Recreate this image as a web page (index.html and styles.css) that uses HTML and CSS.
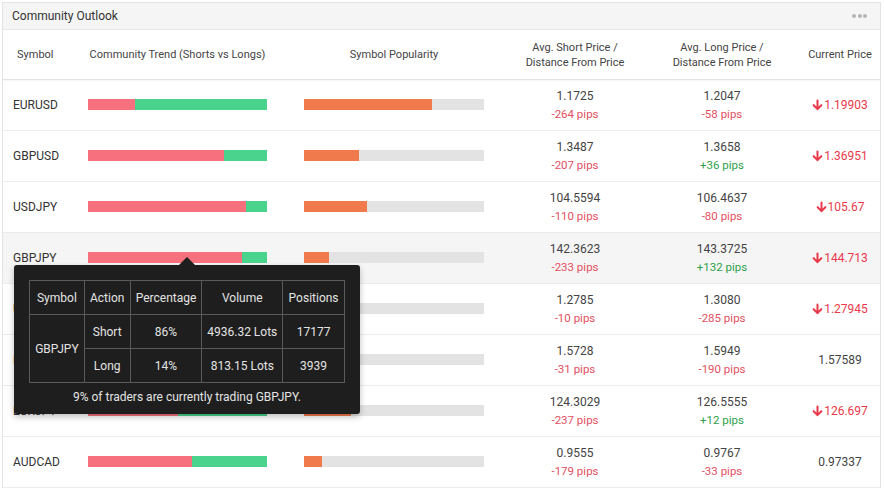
FILE: index.html
```html
<!DOCTYPE html>
<html>
<head>
<meta charset="utf-8">
<link rel="stylesheet" href="styles.css">
</head>
<body>
<div class="panel">
  <div class="panel-head">
    <span class="panel-title">Community Outlook</span>
    <span class="dots"><i></i><i></i><i></i></span>
  </div>
  <div class="table">
    <div class="row head">
      <div class="c-sym">Symbol</div>
      <div class="c-mid">Community Trend (Shorts vs Longs)</div>
      <div class="c-mid">Symbol Popularity</div>
      <div class="c-mid">Avg. Short Price /<br>Distance From Price</div>
      <div class="c-mid">Avg. Long Price /<br>Distance From Price</div>
      <div class="c-mid">Current Price</div>
    </div>

    <div class="row">
      <div class="c-sym sym">EURUSD</div>
      <div class="c-mid"><div class="trend"><span class="short" style="width:26%"></span><span class="long"></span></div></div>
      <div class="c-mid"><div class="pop"><span style="width:71%"></span></div></div>
      <div class="c-mid price"><div>1.1725</div><div class="neg">-264 pips</div></div>
      <div class="c-mid price"><div>1.2047</div><div class="neg">-58 pips</div></div>
      <div class="c-mid cur down"><svg class="arr" viewBox="0 0 12 12"><path d="M6 1v9.5M1.8 6.2 6 10.5l4.2-4.3"/></svg>1.19903</div>
    </div>

    <div class="row">
      <div class="c-sym sym">GBPUSD</div>
      <div class="c-mid"><div class="trend"><span class="short" style="width:76%"></span><span class="long"></span></div></div>
      <div class="c-mid"><div class="pop"><span style="width:30.5%"></span></div></div>
      <div class="c-mid price"><div>1.3487</div><div class="neg">-207 pips</div></div>
      <div class="c-mid price"><div>1.3658</div><div class="pos">+36 pips</div></div>
      <div class="c-mid cur down"><svg class="arr" viewBox="0 0 12 12"><path d="M6 1v9.5M1.8 6.2 6 10.5l4.2-4.3"/></svg>1.36951</div>
    </div>

    <div class="row">
      <div class="c-sym sym">USDJPY</div>
      <div class="c-mid"><div class="trend"><span class="short" style="width:88%"></span><span class="long"></span></div></div>
      <div class="c-mid"><div class="pop"><span style="width:35%"></span></div></div>
      <div class="c-mid price"><div>104.5594</div><div class="neg">-110 pips</div></div>
      <div class="c-mid price"><div>106.4637</div><div class="neg">-80 pips</div></div>
      <div class="c-mid cur down"><svg class="arr" viewBox="0 0 12 12"><path d="M6 1v9.5M1.8 6.2 6 10.5l4.2-4.3"/></svg>105.67</div>
    </div>

    <div class="row hover">
      <div class="c-sym sym">GBPJPY</div>
      <div class="c-mid"><div class="trend"><span class="short" style="width:86%"></span><span class="long"></span></div></div>
      <div class="c-mid"><div class="pop"><span style="width:14%"></span></div></div>
      <div class="c-mid price"><div>142.3623</div><div class="neg">-233 pips</div></div>
      <div class="c-mid price"><div>143.3725</div><div class="pos">+132 pips</div></div>
      <div class="c-mid cur down"><svg class="arr" viewBox="0 0 12 12"><path d="M6 1v9.5M1.8 6.2 6 10.5l4.2-4.3"/></svg>144.713</div>
    </div>

    <div class="row">
      <div class="c-sym sym">USDCAD</div>
      <div class="c-mid"><div class="trend"><span class="short" style="width:62%"></span><span class="long"></span></div></div>
      <div class="c-mid"><div class="pop"><span style="width:20%"></span></div></div>
      <div class="c-mid price"><div>1.2785</div><div class="neg">-10 pips</div></div>
      <div class="c-mid price"><div>1.3080</div><div class="neg">-285 pips</div></div>
      <div class="c-mid cur down"><svg class="arr" viewBox="0 0 12 12"><path d="M6 1v9.5M1.8 6.2 6 10.5l4.2-4.3"/></svg>1.27945</div>
    </div>

    <div class="row">
      <div class="c-sym sym">EURAUD</div>
      <div class="c-mid"><div class="trend"><span class="short" style="width:48%"></span><span class="long"></span></div></div>
      <div class="c-mid"><div class="pop"><span style="width:15%"></span></div></div>
      <div class="c-mid price"><div>1.5728</div><div class="neg">-31 pips</div></div>
      <div class="c-mid price"><div>1.5949</div><div class="neg">-190 pips</div></div>
      <div class="c-mid cur">1.57589</div>
    </div>

    <div class="row">
      <div class="c-sym sym">EURJPY</div>
      <div class="c-mid"><div class="trend"><span class="short" style="width:50%"></span><span class="long"></span></div></div>
      <div class="c-mid"><div class="pop"><span style="width:26%"></span></div></div>
      <div class="c-mid price"><div>124.3029</div><div class="neg">-237 pips</div></div>
      <div class="c-mid price"><div>126.5555</div><div class="pos">+12 pips</div></div>
      <div class="c-mid cur down"><svg class="arr" viewBox="0 0 12 12"><path d="M6 1v9.5M1.8 6.2 6 10.5l4.2-4.3"/></svg>126.697</div>
    </div>

    <div class="row">
      <div class="c-sym sym">AUDCAD</div>
      <div class="c-mid"><div class="trend"><span class="short" style="width:58%"></span><span class="long"></span></div></div>
      <div class="c-mid"><div class="pop"><span style="width:10%"></span></div></div>
      <div class="c-mid price"><div>0.9555</div><div class="neg">-179 pips</div></div>
      <div class="c-mid price"><div>0.9767</div><div class="neg">-33 pips</div></div>
      <div class="c-mid cur">0.97337</div>
    </div>

    <div class="tooltip">
      <table class="tt-table">
        <tr><th>Symbol</th><th>Action</th><th>Percentage</th><th>Volume</th><th>Positions</th></tr>
        <tr><td rowspan="2">GBPJPY</td><td>Short</td><td>86%</td><td>4936.32 Lots</td><td>17177</td></tr>
        <tr><td>Long</td><td>14%</td><td>813.15 Lots</td><td>3939</td></tr>
      </table>
      <div class="tt-foot">9% of traders are currently trading GBPJPY.</div>
    </div>
  </div>
</div>
</body>
</html>
```

FILE: styles.css
```css
* { box-sizing: border-box; }
html, body {
  margin: 0;
  padding: 0;
  background: #ffffff;
}
body {
  font-family: Roboto, "Liberation Sans", Arial, sans-serif;
  font-size: 12px;
  color: #333;
}
.panel {
  margin: 2px 3px 0 2px;
  border: 1px solid #e4e4e4;
  border-bottom: none;
}
.panel-head {
  height: 27px;
  background: #f5f5f5;
  border-bottom: 1px solid #e6e6e6;
  display: flex;
  align-items: center;
  justify-content: space-between;
  padding: 0 13px 0 9px;
}
.panel-title {
  font-size: 12px;
  color: #333;
}
.dots {
  display: flex;
  gap: 1.5px;
}
.dots i {
  width: 4px;
  height: 4px;
  border-radius: 50%;
  background: #b5b5b5;
}
.table {
  position: relative;
}
.row {
  display: grid;
  grid-template-columns: 70px 209px 224px 138px 156px 1fr;
  align-items: center;
  height: 51px;
  border-bottom: 1px solid #ececec;
}
.row.head {
  height: 50px;
  border-bottom: 1px solid #e2e2e2;
  color: #444;
  font-size: 11px;
  line-height: 15px;
  box-shadow: 0 1px 1px rgba(0,0,0,0.03);
}
.row.head .c-sym {
  padding-left: 14px;
}
.row.hover {
  background: #f5f5f5;
}
.c-sym {
  padding-left: 10px;
}
.sym {
  font-size: 12px;
  color: #333;
}
.c-mid {
  text-align: center;
  display: flex;
  flex-direction: column;
  align-items: center;
  justify-content: center;
}
.trend {
  width: 179px;
  height: 11px;
  display: flex;
  margin-top: -1px;
}
.trend .short {
  background: #f7707e;
  height: 100%;
}
.trend .long {
  background: #4ad38d;
  flex: 1;
  height: 100%;
}
.pop {
  width: 180px;
  height: 11px;
  background: #e3e3e3;
  margin-top: -1px;
}
.pop span {
  display: block;
  height: 100%;
  background: #f07a4b;
}
.price {
  font-size: 12px;
  line-height: 18px;
  color: #444;
}
.price .neg {
  color: #e2505f;
  font-size: 11.5px;
}
.price .pos {
  color: #2e9f4c;
  font-size: 11.5px;
}
.cur {
  flex-direction: row;
  font-size: 12px;
  color: #444;
}
.cur.down {
  color: #e83a4a;
}
.arr {
  width: 11px;
  height: 12px;
  margin-right: 1px;
  fill: none;
  stroke: #e83a4a;
  stroke-width: 2.2;
  stroke-linecap: round;
  stroke-linejoin: round;
}
.tooltip {
  position: absolute;
  left: 11px;
  top: 235px;
  width: 346px;
  height: 149px;
  background: #1e1e1e;
  border-radius: 3px;
  padding: 15px 15px 0 15px;
  color: #e4e4e4;
  box-shadow: 0 3px 6px rgba(0,0,0,0.25);
}
.tooltip::before {
  content: "";
  position: absolute;
  left: 165px;
  top: -8px;
  border-left: 8px solid transparent;
  border-right: 8px solid transparent;
  border-bottom: 8px solid #1e1e1e;
}
.tt-table {
  border-collapse: collapse;
  width: 316px;
  font-size: 12px;
}
.tt-table th, .tt-table td {
  border: 1px solid #5a5a5a;
  height: 34px;
  text-align: center;
  font-weight: normal;
  padding: 0;
  white-space: nowrap;
}
.tt-table th:nth-child(1) { width: 55px; }
.tt-table th:nth-child(2) { width: 46px; }
.tt-table th:nth-child(3) { width: 72px; }
.tt-table th:nth-child(4) { width: 81px; }
.tt-table th:nth-child(5) { width: 62px; }
.tt-foot {
  text-align: center;
  font-size: 12px;
  margin-top: 6px;
  line-height: 16px;
}
```
